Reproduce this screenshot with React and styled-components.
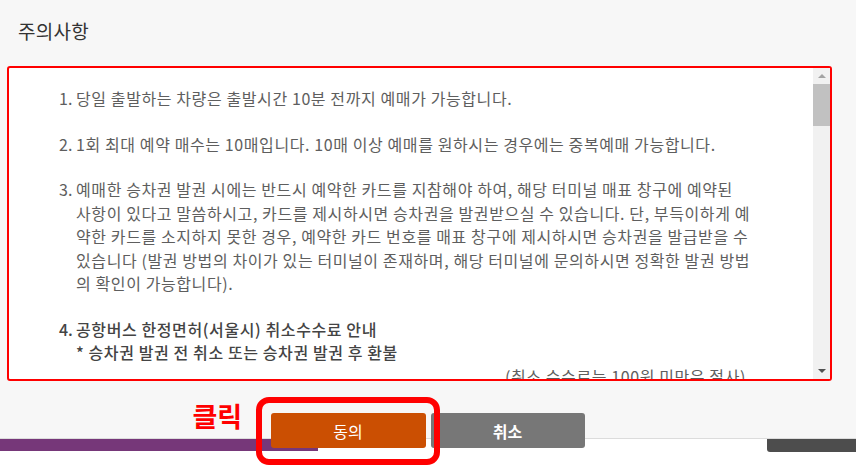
import React from 'react'
import styled, { createGlobalStyle } from 'styled-components'

const GlobalStyle = createGlobalStyle`
  html, body {
    margin: 0;
    padding: 0;
    background: #fff;
    font-family: "Noto Sans CJK KR", "Noto Sans", sans-serif;
  }
`

const Page = styled.div`
  width: 856px;
  height: 468px;
  overflow: hidden;
  display: flex;
  flex-direction: column;
`

const Modal = styled.section`
  position: relative;
  z-index: 2;
  box-sizing: border-box;
  height: 439px;
  padding: 0 24px 0 7px;
  background: #f7f7f7;
  border-bottom: 1px solid #dcdcdc;
  display: flex;
  flex-direction: column;
`

const Title = styled.h2`
  margin: 19px 0 23px 11px;
  font-size: 19px;
  letter-spacing: 0.3px;
  line-height: 24px;
  font-weight: 400;
  color: #333;
`

const NoticeBox = styled.div`
  box-sizing: border-box;
  height: 315px;
  border: 2px solid #ff0000;
  border-radius: 3px;
  background: #fff;
  display: flex;
`

const Content = styled.div`
  flex: 1;
  overflow: hidden;
  padding: 19px 0 0 50px;
  font-size: 16px;
  letter-spacing: 0.6px;
  line-height: 23.5px;
  color: #5e5e5e;
`

const Item = styled.div`
  display: flex;
  margin-bottom: 22px;
  font-weight: ${p => (p.$strong ? 500 : 400)};
  color: ${p => (p.$strong ? '#444' : 'inherit')};
`

const Num = styled.span`
  flex: 0 0 17px;
  letter-spacing: 0;
`

const Lines = styled.div`
  flex: 1;
  display: flex;
  flex-direction: column;
`

const Line = styled.span`
  white-space: nowrap;
  text-align: ${p => (p.$right ? 'right' : 'left')};
  padding-right: ${p => (p.$right ? '67px' : '0')};
  font-weight: ${p => (p.$light ? 400 : 'inherit')};
  color: ${p => (p.$light ? '#5e5e5e' : 'inherit')};
`

const ScrollBar = styled.div`
  flex: 0 0 17px;
  background: #f1f1f1;
  display: flex;
  flex-direction: column;
`

const Arrow = styled.div`
  height: 16px;
  display: flex;
  align-items: center;
  justify-content: center;
  &::before {
    content: "";
    border-left: 4px solid transparent;
    border-right: 4px solid transparent;
    ${p =>
      p.$down
        ? 'border-top: 4px solid #505050;'
        : 'border-bottom: 4px solid #a3a3a3;'}
  }
`

const Thumb = styled.div`
  height: 42px;
  background: #c1c1c1;
`

const Track = styled.div`
  flex: 1;
`

const ButtonRow = styled.div`
  margin-top: 32px;
  display: flex;
  justify-content: center;
  padding-left: 16px;
`

const ButtonGroup = styled.div`
  position: relative;
  display: flex;
  gap: 5px;
`

const Button = styled.button`
  width: ${p => (p.$primary ? '155px' : '154px')};
  height: 35px;
  border: none;
  border-radius: 3px;
  background: ${p => (p.$primary ? '#cb4f02' : '#777777')};
  color: #fff;
  font-family: "Noto Sans CJK KR", sans-serif;
  font-size: 16px;
  font-weight: ${p => (p.$primary ? 400 : 700)};
  padding: 0;
  cursor: pointer;
`

const ClickLabel = styled.span`
  position: absolute;
  left: -78px;
  top: -14px;
  font-size: 27px;
  font-weight: 700;
  color: #ff0000;
  line-height: 34px;
  white-space: nowrap;
`

const Highlight = styled.div`
  position: absolute;
  left: -15px;
  top: -16px;
  width: 184px;
  height: 68px;
  box-sizing: border-box;
  border: 6px solid #ff0000;
  border-radius: 13px;
  pointer-events: none;
`

const Backdrop = styled.div`
  display: flex;
  justify-content: space-between;
  align-items: flex-start;
`

const PurpleBar = styled.div`
  width: 318px;
  height: 12px;
  background: #763779;
`

const DarkTab = styled.div`
  width: 89px;
  height: 13px;
  background: #4d4d4d;
  border-bottom-left-radius: 3px;
`

const notices = [
  ['당일 출발하는 차량은 출발시간 10분 전까지 예매가 가능합니다.'],
  ['1회 최대 예약 매수는 10매입니다. 10매 이상 예매를 원하시는 경우에는 중복예매 가능합니다.'],
  [
    '예매한 승차권 발권 시에는 반드시 예약한 카드를 지참해야 하여, 해당 터미널 매표 창구에 예약된',
    '사항이 있다고 말씀하시고, 카드를 제시하시면 승차권을 발권받으실 수 있습니다. 단, 부득이하게 예',
    '약한 카드를 소지하지 못한 경우, 예약한 카드 번호를 매표 창구에 제시하시면 승차권을 발급받을 수',
    '있습니다 (발권 방법의 차이가 있는 터미널이 존재하며, 해당 터미널에 문의하시면 정확한 발권 방법',
    '의 확인이 가능합니다).',
  ],
]

export default function App() {
  return (
    <Page>
      <GlobalStyle />
      <Modal>
        <Title>주의사항</Title>
        <NoticeBox>
          <Content>
            {notices.map((lines, i) => (
              <Item key={i}>
                <Num>{i + 1}.</Num>
                <Lines>
                  {lines.map(l => (
                    <Line key={l}>{l}</Line>
                  ))}
                </Lines>
              </Item>
            ))}
            <Item $strong>
              <Num>4.</Num>
              <Lines>
                <Line>공항버스 한정면허(서울시) 취소수수료 안내</Line>
                <Line>* 승차권 발권 전 취소 또는 승차권 발권 후 환불</Line>
                <Line $right $light>(취소 수수료는 100원 미만은 절사)</Line>
              </Lines>
            </Item>
          </Content>
          <ScrollBar>
            <Arrow />
            <Thumb />
            <Track />
            <Arrow $down />
          </ScrollBar>
        </NoticeBox>
        <ButtonRow>
          <ButtonGroup>
            <ClickLabel>클릭</ClickLabel>
            <Button $primary>동의</Button>
            <Button>취소</Button>
            <Highlight />
          </ButtonGroup>
        </ButtonRow>
      </Modal>
      <Backdrop>
        <PurpleBar />
        <DarkTab />
      </Backdrop>
    </Page>
  )
}
